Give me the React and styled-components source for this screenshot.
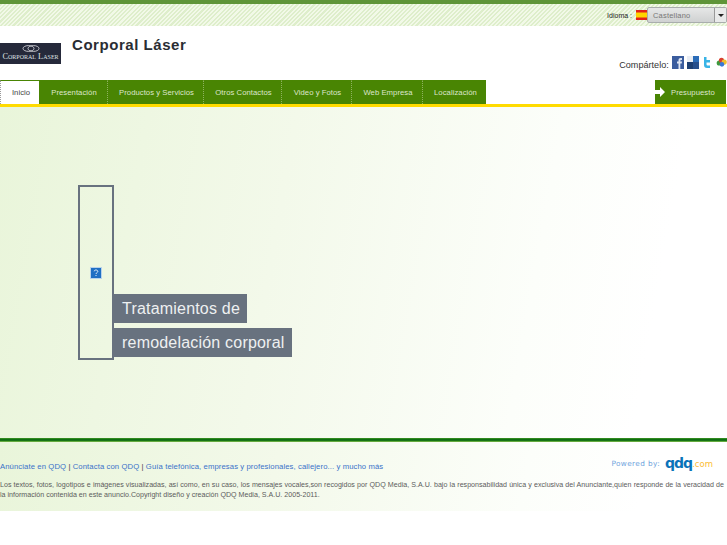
import React from 'react';
import styled, { createGlobalStyle } from 'styled-components';

const GlobalStyle = createGlobalStyle`
  html, body {
    margin: 0;
    padding: 0;
    background: #fff;
    font-family: "Liberation Sans", Arial, sans-serif;
  }
`;

const Page = styled.div`
  width: 727px;
  height: 545px;
  overflow: hidden;
  background: #fff;
  opacity: 0.999;
`;

const TopBar = styled.div`
  height: 22px;
  border-top: 4px solid #5f9538;
  display: flex;
  justify-content: flex-end;
  align-items: center;
  background: repeating-linear-gradient(135deg, #deeecb 0 1.5px, #f2f9e8 1.5px 3px);
`;

const LangLabel = styled.span`
  font-size: 7px;
  color: #222;
  margin-right: 4px;
`;

const LangSelect = styled.div`
  width: 78px;
  height: 14px;
  display: flex;
  border: 1px solid #a9adad;
  border-radius: 2px;
  background: linear-gradient(#e6e7e7, #cfd1d1);
  box-sizing: content-box;
`;

const LangValue = styled.span`
  flex: 1;
  font-size: 7.5px;
  line-height: 15px;
  letter-spacing: 0.2px;
  color: #777;
  padding-left: 5px;
`;

const LangArrow = styled.span`
  width: 11px;
  border-left: 1px solid #999;
  background: #e9eaea;
  display: flex;
  align-items: center;
  justify-content: center;
  &::after {
    content: "";
    border-left: 3px solid transparent;
    border-right: 3px solid transparent;
    border-top: 3px solid #222;
  }
`;

const Header = styled.div`
  height: 54px;
  display: flex;
`;

const Logo = styled.div`
  width: 61px;
  height: 21px;
  margin-top: 17px;
  background: #25293a;
  display: flex;
  flex-direction: column;
  align-items: center;
  color: #dfe0e4;
`;

const LogoName = styled.span`
  font-family: "Liberation Serif", serif;
  font-size: 8.4px;
  line-height: 8px;
  margin-top: 1px;
  white-space: nowrap;
  font-variant: small-caps;
`;

const Title = styled.h1`
  margin: 10px 0 0 11px;
  font-size: 15px;
  line-height: 18px;
  font-weight: bold;
  letter-spacing: 0.55px;
  color: #2a2d33;
`;

const Share = styled.div`
  margin-left: auto;
  margin-top: 32px;
  height: 14px;
  display: flex;
  align-items: center;
  gap: 3px;
  font-size: 9.1px;
  color: #333;
`;

const ShareIcons = styled.div`
  display: flex;
  gap: 2.75px;
  margin-top: -6px;
  svg { display: block; }
`;

const NavRow = styled.nav`
  height: 24px;
  display: flex;
  justify-content: space-between;
  padding-right: 1px;
`;

const Tabs = styled.div`
  display: flex;
`;

const Tab = styled.a`
  width: ${(p) => p.$w}px;
  box-sizing: border-box;
  padding-left: 2px;
  display: flex;
  align-items: center;
  justify-content: center;
  font-size: 7.7px;
  letter-spacing: 0.05px;
  white-space: nowrap;
  background: ${(p) => (p.$active ? '#fff' : '#498503')};
  color: ${(p) => (p.$active ? '#444' : '#dde6cc')};
  border-top: 1px solid #498503;
  border-left: ${(p) => (p.$active ? '1px dotted #999' : 'none')};
  border-right: ${(p) => (p.$last || p.$active ? 'none' : '1px dotted #8fb35f')};
`;

const QuoteButton = styled.a`
  position: relative;
  width: 71px;
  box-sizing: border-box;
  padding-left: 16px;
  display: flex;
  align-items: center;
  font-size: 7.7px;
  letter-spacing: 0.05px;
  background: #498503;
  color: #dde6cc;
  svg {
    position: absolute;
    left: 0;
    top: 7px;
  }
`;

const YellowRule = styled.div`
  height: 3px;
  background: #ffdb00;
`;

const Hero = styled.section`
  height: 331px;
  box-sizing: border-box;
  padding: 78px 0 0 78px;
  display: flex;
  align-items: flex-start;
  background: linear-gradient(100deg, #e9f5da 0%, #f3f9ea 38%, #fcfefa 72%, #fff 88%);
`;

const BrokenFrame = styled.div`
  width: 36px;
  height: 175px;
  box-sizing: border-box;
  border: 2px solid #68727f;
  display: flex;
  align-items: center;
  justify-content: center;
  svg { display: block; }
`;

const Captions = styled.div`
  display: flex;
  flex-direction: column;
  align-items: flex-start;
  gap: 5px;
  margin-top: 109px;
`;

const Caption = styled.div`
  height: 29px;
  box-sizing: border-box;
  padding: 0 7px 0 8px;
  font-size: 16px;
  line-height: 29px;
  letter-spacing: 0.2px;
  color: #eef0f1;
  background: #68727f;
  white-space: nowrap;
`;

const FooterRule = styled.div`
  height: 4px;
  background: linear-gradient(#52a52c 0, #0f6e12 25%, #0f6e12 60%, #8cc653 100%);
`;

const Footer = styled.footer`
  height: 69px;
  box-sizing: border-box;
  position: relative;
  background: linear-gradient(100deg, #e9f5da 0%, #f3f9ea 38%, #fcfefa 72%, #fff 88%);
`;

const FooterLinks = styled.div`
  padding-top: 19px;
  height: 13px;
  font-size: 7.7px;
  line-height: 11px;
  letter-spacing: 0.1px;
  color: #444;
  white-space: nowrap;
  a { color: #3a72c9; }
`;

const Legal = styled.p`
  margin: 6px 0 0;
  width: 724px;
  font-size: 7.1px;
  line-height: 10px;
  text-align: justify;
  color: #5c5c5c;
`;

const Powered = styled.div`
  position: absolute;
  right: 14px;
  top: 14px;
  display: flex;
  align-items: center;
  gap: 5px;
  font-family: "DejaVu Sans", sans-serif;
  font-size: 7.3px;
  letter-spacing: 0.4px;
  color: #6ea3dd;
`;

const QdqMark = styled.span`
  font-family: "DejaVu Sans", sans-serif;
  font-size: 14px;
  line-height: 15px;
  font-weight: bold;
  letter-spacing: -1px;
  color: #0b73b9;
`;

const DotCom = styled.span`
  font-size: 8.5px;
  letter-spacing: 0;
  margin-left: -5px;
  color: #fbbd36;
`;

const tabs = [
  { label: 'Inicio', w: 39 },
  { label: 'Presentación', w: 69 },
  { label: 'Productos y Servicios', w: 96 },
  { label: 'Otros Contactos', w: 78 },
  { label: 'Video y Fotos', w: 70 },
  { label: 'Web Empresa', w: 71 },
  { label: 'Localización', w: 63 },
];

function SpainFlag() {
  return (
    <svg width="12" height="10" viewBox="0 0 12 10" style={{ marginRight: -1 }}>
      <rect width="12" height="10" fill="#e2231a" />
      <rect y="2.5" width="12" height="5" fill="#ffd400" />
    </svg>
  );
}

function ShareButtons() {
  return (
    <ShareIcons>
      <svg width="12" height="13" viewBox="0 0 12 13">
        <rect width="12" height="13" fill="#3b5d9e" />
        <path d="M6.5 13V7.5H5V5.5h1.500V4.300C6.500 2.800 7.300 2 8.700 2H10v2H9c-.5 0-.7.2-.7.700v.8H10l-.3 2H8.300V13z" fill="#dfe6f2" />
      </svg>
      <svg width="12" height="13" viewBox="0 0 12 13">
        <rect width="12" height="13" fill="#e9edf3" />
        <rect x="6" y="0" width="6" height="6" fill="#2b6cb8" />
        <rect x="0" y="6" width="6" height="7" fill="#1d3f72" />
        <rect x="6" y="6" width="6" height="7" fill="#274f8c" />
      </svg>
      <svg width="12" height="13" viewBox="0 0 12 13">
        <path d="M3 1h2.500v3H9v2.500H5.500V8c0 1 .5 1.500 1.500 1.500h2V12H6C4 12 3 10.800 3 9z" fill="#39b4e6" />
      </svg>
      <svg width="11" height="13" viewBox="0 0 12 13">
        <circle cx="3.500" cy="7" r="2.800" fill="#3f9a3c" />
        <circle cx="6" cy="4" r="2.800" fill="#d9412f" />
        <circle cx="9" cy="6" r="2.800" fill="#f1c02d" />
        <circle cx="6.500" cy="8.500" r="2.500" fill="#3a78d6" />
      </svg>
    </ShareIcons>
  );
}

export default function App() {
  return (
    <Page>
      <GlobalStyle />
      <TopBar>
        <LangLabel>Idioma :</LangLabel>
        <SpainFlag />
        <LangSelect>
          <LangValue>Castellano</LangValue>
          <LangArrow />
        </LangSelect>
      </TopBar>

      <Header>
        <Logo>
          <svg width="18" height="7" viewBox="0 0 18 7" style={{ marginTop: 2 }}>
            <ellipse cx="6.500" cy="3.500" rx="5.500" ry="2.900" fill="none" stroke="#e4e5e8" strokeWidth="0.8" />
            <ellipse cx="11.500" cy="3.500" rx="5.500" ry="2.900" fill="none" stroke="#e4e5e8" strokeWidth="0.8" />
          </svg>
          <LogoName>Corporal Laser</LogoName>
        </Logo>
        <Title>Corporal Láser</Title>
        <Share>
          Compártelo:
          <ShareButtons />
        </Share>
      </Header>

      <NavRow>
        <Tabs>
          {tabs.map((tab, i) => (
            <Tab key={tab.label} $w={tab.w} $active={i === 0} $last={i === tabs.length - 1}>
              {tab.label}
            </Tab>
          ))}
        </Tabs>
        <QuoteButton>
          <svg width="10" height="10" viewBox="0 0 10 10">
            <path d="M0 3h5V0l5 5-5 5V7H0z" fill="#fff" />
          </svg>
          Presupuesto
        </QuoteButton>
      </NavRow>
      <YellowRule />

      <Hero>
        <BrokenFrame>
          <svg width="12" height="12" viewBox="0 0 12 12">
            <rect width="12" height="12" fill="#b9d3ea" />
            <rect x="1" y="1" width="10" height="10" fill="#1f6fc4" />
            <path d="M4.200 4.300C4.300 3.300 5 3 6 3s1.800.5 1.800 1.500S6 5.800 6 7" fill="none" stroke="#e6f0fa" strokeWidth="1" />
            <rect x="5.500" y="8" width="1" height="1" fill="#e6f0fa" />
          </svg>
        </BrokenFrame>
        <Captions>
          <Caption>Tratamientos de</Caption>
          <Caption>remodelación corporal</Caption>
        </Captions>
      </Hero>

      <FooterRule />
      <Footer>
        <FooterLinks>
          <a>Anúnciate en QDQ</a> | <a>Contacta con QDQ</a> | <a>Guía telefónica, empresas y profesionales, callejero... y mucho más</a>
        </FooterLinks>
        <Legal>
          Los textos, fotos, logotipos e imágenes visualizadas, así como, en su caso, los mensajes vocales,son recogidos por QDQ Media, S.A.U. bajo la responsabilidad única y exclusiva del Anunciante,quien responde de la veracidad de la información contenida en este anuncio.Copyright diseño y creación QDQ Media, S.A.U. 2005-2011.
        </Legal>
        <Powered>
          Powered by:
          <QdqMark>qdq</QdqMark>
          <DotCom>.com</DotCom>
        </Powered>
      </Footer>
    </Page>
  );
}
